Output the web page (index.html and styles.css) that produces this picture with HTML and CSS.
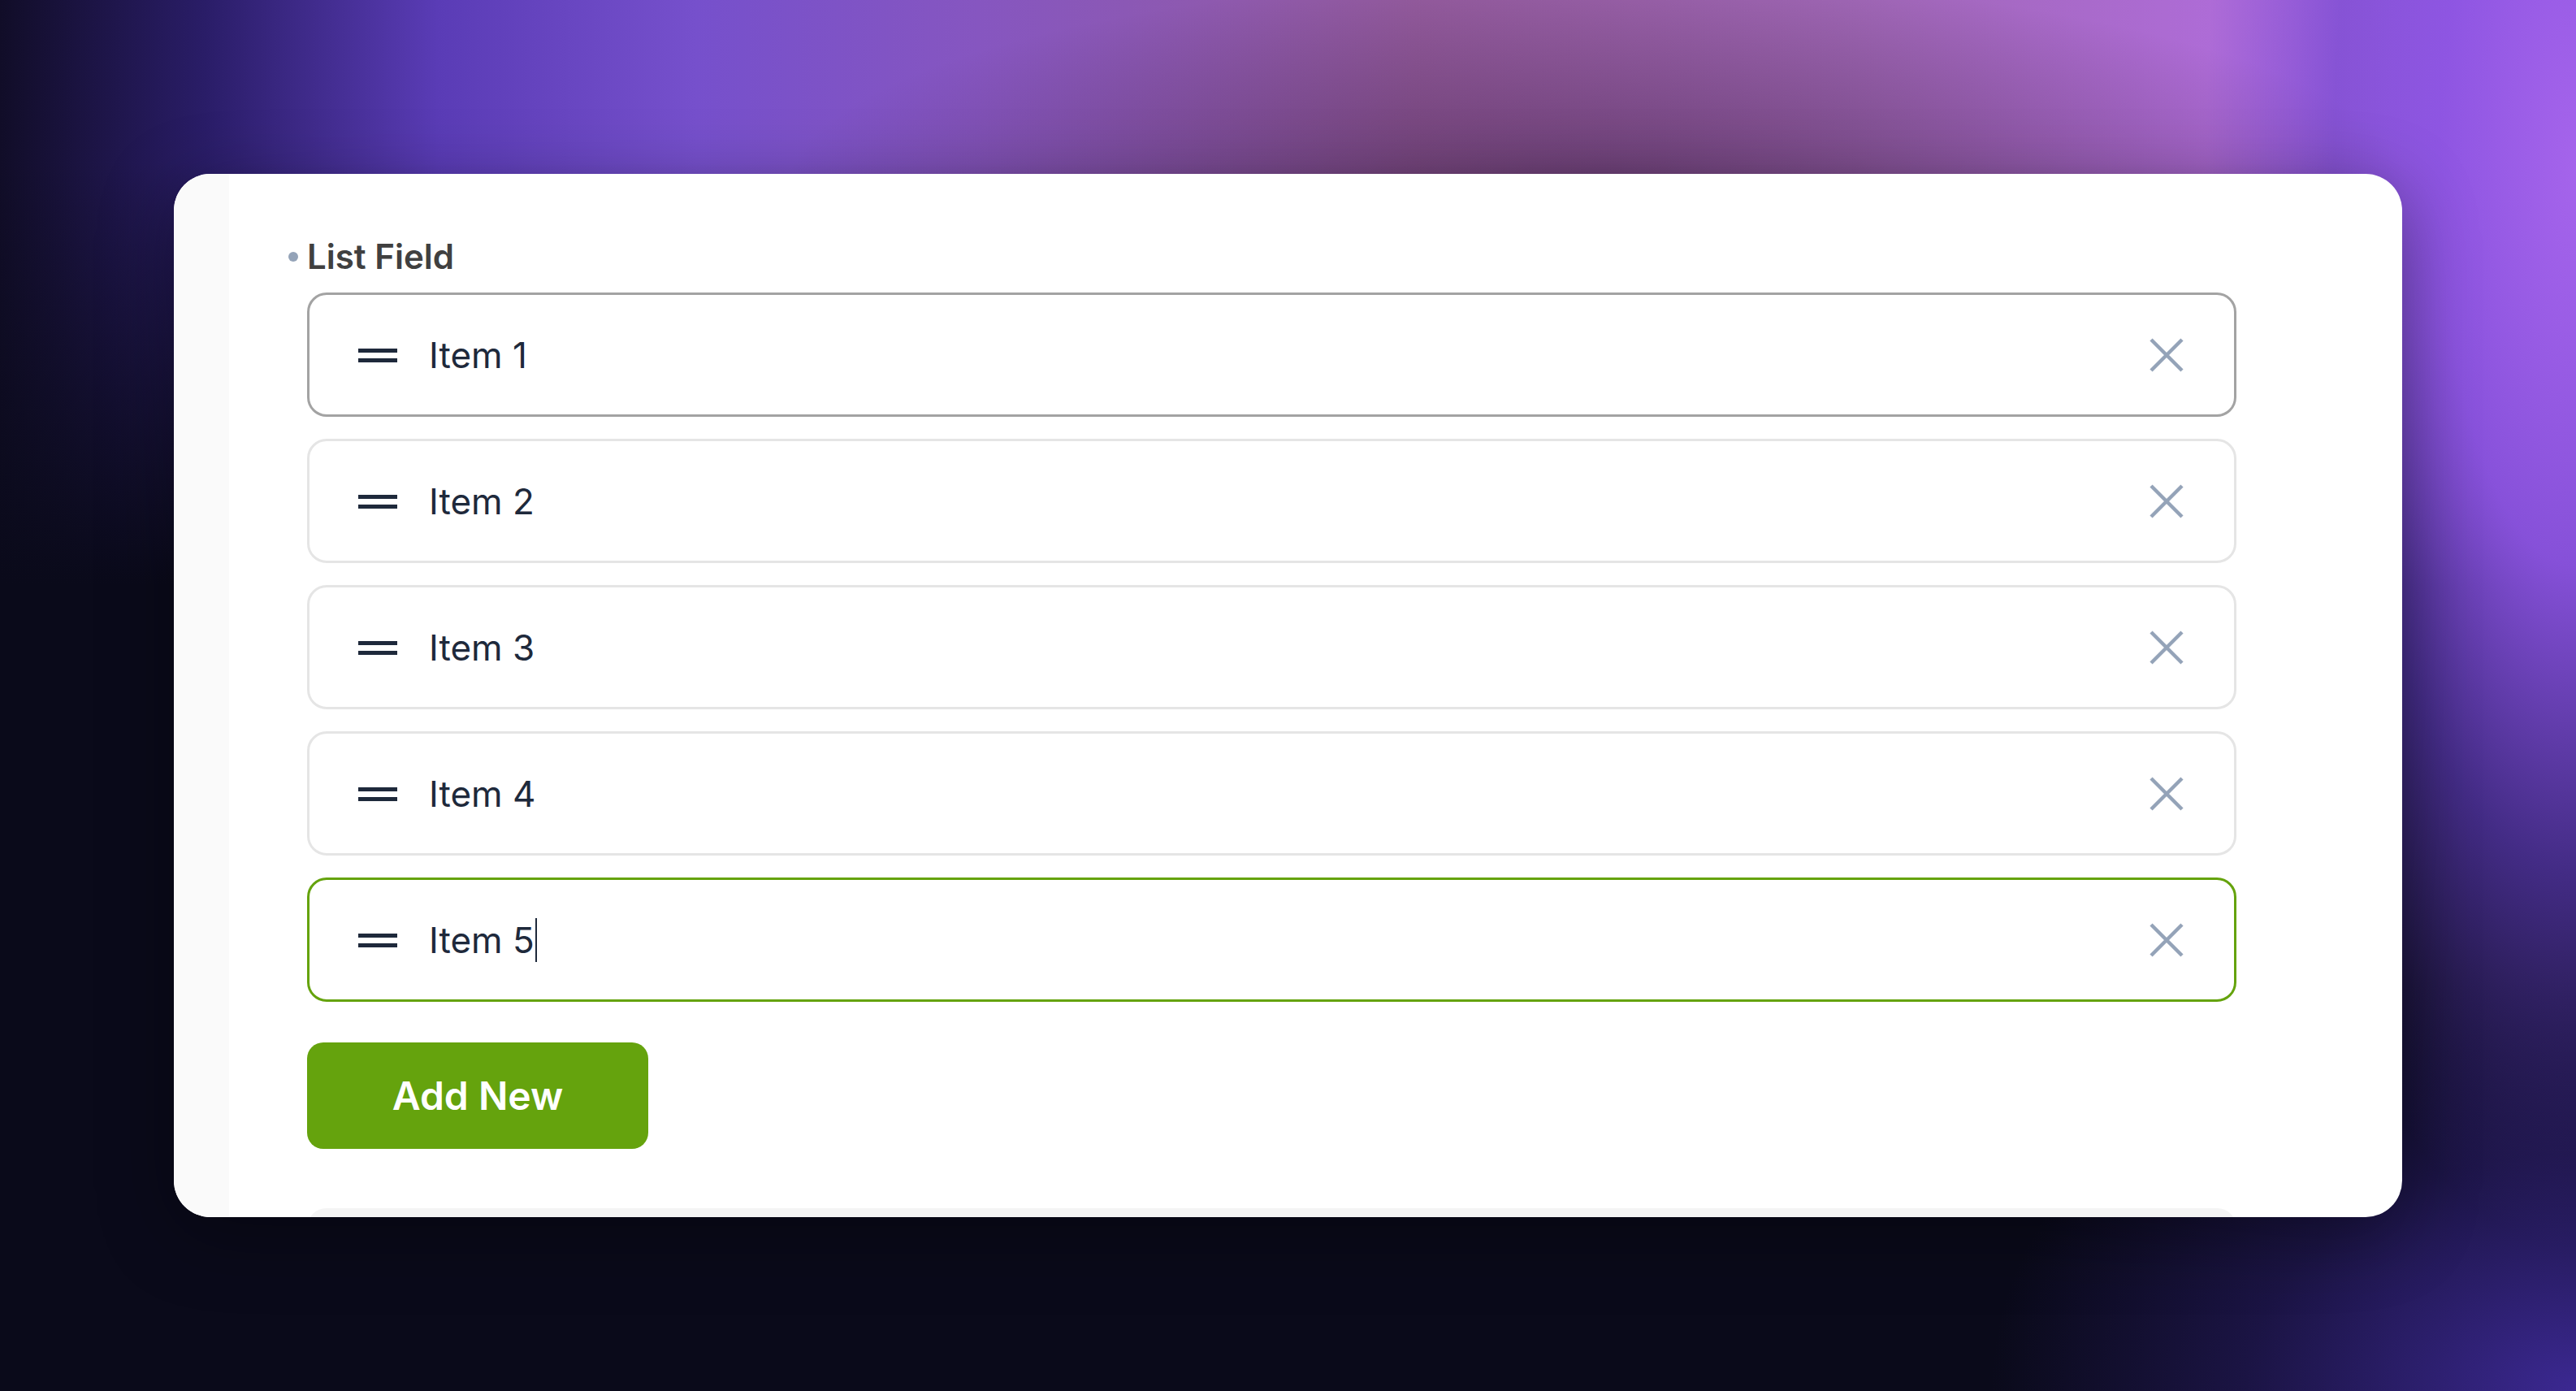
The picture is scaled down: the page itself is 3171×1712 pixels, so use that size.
FILE: index.html
```html
<!DOCTYPE html>
<html lang="en">
<head>
<meta charset="utf-8">
<title>List Field</title>
<link rel="stylesheet" href="styles.css">
</head>
<body>
<div class="page">
  <div class="card">
    <div class="rail"></div>
    <div class="main">
      <div class="label"><span class="dot"></span><span>List Field</span></div>
      <div class="list">
        <div class="item item-hover">
          <svg class="handle" viewBox="0 0 48 18" width="48" height="18"><rect x="0" y="0" width="48" height="5" fill="#1e293b"/><rect x="0" y="12" width="48" height="5" fill="#1e293b"/></svg>
          <span class="text">Item 1</span>
          <svg class="remove" viewBox="0 0 44 44" width="44" height="44"><path d="M3 3L41 41M41 3L3 41" stroke="#94a3b8" stroke-width="4.5" fill="none"/></svg>
        </div>
        <div class="item">
          <svg class="handle" viewBox="0 0 48 18" width="48" height="18"><rect x="0" y="0" width="48" height="5" fill="#1e293b"/><rect x="0" y="12" width="48" height="5" fill="#1e293b"/></svg>
          <span class="text">Item 2</span>
          <svg class="remove" viewBox="0 0 44 44" width="44" height="44"><path d="M3 3L41 41M41 3L3 41" stroke="#94a3b8" stroke-width="4.5" fill="none"/></svg>
        </div>
        <div class="item">
          <svg class="handle" viewBox="0 0 48 18" width="48" height="18"><rect x="0" y="0" width="48" height="5" fill="#1e293b"/><rect x="0" y="12" width="48" height="5" fill="#1e293b"/></svg>
          <span class="text">Item 3</span>
          <svg class="remove" viewBox="0 0 44 44" width="44" height="44"><path d="M3 3L41 41M41 3L3 41" stroke="#94a3b8" stroke-width="4.5" fill="none"/></svg>
        </div>
        <div class="item">
          <svg class="handle" viewBox="0 0 48 18" width="48" height="18"><rect x="0" y="0" width="48" height="5" fill="#1e293b"/><rect x="0" y="12" width="48" height="5" fill="#1e293b"/></svg>
          <span class="text">Item 4</span>
          <svg class="remove" viewBox="0 0 44 44" width="44" height="44"><path d="M3 3L41 41M41 3L3 41" stroke="#94a3b8" stroke-width="4.5" fill="none"/></svg>
        </div>
        <div class="item item-focus">
          <svg class="handle" viewBox="0 0 48 18" width="48" height="18"><rect x="0" y="0" width="48" height="5" fill="#1e293b"/><rect x="0" y="12" width="48" height="5" fill="#1e293b"/></svg>
          <span class="text">Item 5<span class="caret"></span></span>
          <svg class="remove" viewBox="0 0 44 44" width="44" height="44"><path d="M3 3L41 41M41 3L3 41" stroke="#94a3b8" stroke-width="4.5" fill="none"/></svg>
        </div>
      </div>
      <button class="add">Add New</button>
      <div class="next"></div>
    </div>
  </div>
</div>
</body>
</html>
```

FILE: styles.css
```css
html, body {
  margin: 0;
  padding: 0;
}

body {
  width: 3171px;
  height: 1712px;
  overflow: hidden;
  font-family: "Inter", "Noto Sans", sans-serif;
  background-color: #0a0a1a;
  background-image:
    radial-gradient(1000px 260px at 62% 230px, rgba(58, 28, 62, 0.5) 0%, rgba(58, 28, 62, 0) 100%),
    radial-gradient(900px 650px at 100% 100%, rgba(62, 42, 152, 0.95) 0%, rgba(44, 30, 110, 0.5) 45%, rgba(30, 20, 80, 0) 80%),
    radial-gradient(480px 1400px at 100% 12%, rgba(165, 100, 235, 1) 0%, rgba(140, 84, 226, 0.95) 35%, rgba(105, 66, 205, 0.6) 62%, rgba(80, 50, 170, 0) 95%),
    linear-gradient(180deg, rgba(10, 10, 26, 0) 0px, rgba(10, 10, 26, 0) 200px, rgba(10, 10, 26, 1) 720px),
    linear-gradient(90deg, #110d28 0%, #2a1d68 8%, #5a3cb6 17%, #7650cc 27%, #8656c0 38%, #955c9f 55%, #a067b6 72%, #b26de0 90%, #b870e8 100%);
}

.page {
  box-sizing: border-box;
  width: 3171px;
  height: 1712px;
  padding: 214px;
}

.card {
  display: flex;
  height: 1284px;
  background: #ffffff;
  border-radius: 45px;
  overflow: hidden;
  box-shadow: 0 20px 90px rgba(0, 0, 0, 0.35);
}

.rail {
  width: 68px;
  flex: none;
  background: #fafafa;
}

.main {
  flex: 1;
  padding: 72px 204px 0 96px;
  display: flex;
  flex-direction: column;
  align-items: flex-start;
}

.label {
  flex: none;
  display: flex;
  align-items: center;
  gap: 11px;
  margin-left: -23px;
  margin-bottom: 15px;
  font-size: 42px;
  line-height: 59px;
  font-weight: 600;
  color: #404040;
}

.dot {
  width: 12px;
  height: 12px;
  border-radius: 50%;
  background: #94a3b8;
}

.list {
  flex: none;
  align-self: stretch;
  display: flex;
  flex-direction: column;
  gap: 27px;
}

.item {
  box-sizing: border-box;
  flex: none;
  height: 153px;
  border: 3px solid #e5e5e5;
  border-radius: 24px;
  display: flex;
  align-items: center;
  padding: 0 61px 0 60px;
  background: #ffffff;
}

.item-hover {
  border-color: #a3a3a3;
}

.item-focus {
  border-color: #65a30d;
}

.handle {
  flex: none;
  margin-top: 3px;
  margin-right: 39px;
}

.text {
  flex: 1;
  font-size: 44px;
  color: #1e293b;
  display: flex;
  align-items: center;
}

.caret {
  display: inline-block;
  width: 0;
  height: 54px;
  border-left: 2px solid #1e293b;
  margin-left: 1px;
}

.remove {
  flex: none;
}

.add {
  flex: none;
  margin-top: 50px;
  width: 420px;
  height: 131px;
  border: none;
  border-radius: 20px;
  background: #65a30d;
  color: #ffffff;
  font-family: "Inter", "Noto Sans", sans-serif;
  font-size: 48px;
  font-weight: 600;
  padding: 0;
}

.next {
  align-self: stretch;
  flex: none;
  margin-top: 73px;
  height: 153px;
  border-radius: 24px;
  background: #f4f4f4;
}
```
